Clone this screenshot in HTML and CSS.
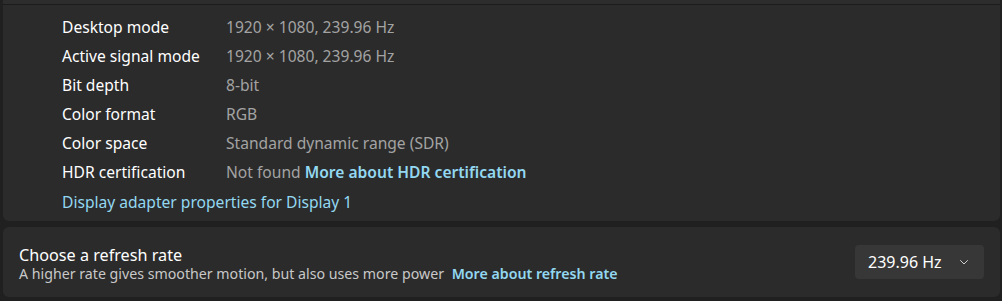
FILE: index.html
```html
<!DOCTYPE html>
<html lang="en">
<head>
    <meta charset="UTF-8">
    <title>Advanced display</title>
    <link rel="stylesheet" href="styles.css">
</head>
<body>
    <div class="expander">
        <div class="expander-head"></div>
        <div class="expander-body">
            <div class="info-row">
                <span class="label">Desktop mode</span>
                <span class="value">1920 × 1080, 239.96 Hz</span>
            </div>
            <div class="info-row">
                <span class="label">Active signal mode</span>
                <span class="value">1920 × 1080, 239.96 Hz</span>
            </div>
            <div class="info-row">
                <span class="label">Bit depth</span>
                <span class="value">8-bit</span>
            </div>
            <div class="info-row">
                <span class="label">Color format</span>
                <span class="value">RGB</span>
            </div>
            <div class="info-row">
                <span class="label">Color space</span>
                <span class="value">Standard dynamic range (SDR)</span>
            </div>
            <div class="info-row">
                <span class="label">HDR certification</span>
                <span class="value">Not found <a class="link strong" href="#">More about HDR certification</a></span>
            </div>
            <div class="info-row last">
                <a class="link" href="#">Display adapter properties for Display 1</a>
            </div>
        </div>
    </div>
    <div class="setting-card">
        <div class="setting-text">
            <div class="setting-title">Choose a refresh rate</div>
            <div class="setting-desc">A higher rate gives smoother motion, but also uses more power <a class="link strong" href="#">More about refresh rate</a></div>
        </div>
        <div class="combo">
            <span>239.96 Hz</span>
            <svg class="chevron" viewBox="0 0 12 12" width="12" height="12">
                <path d="M2.5 4.5 L6 8 L9.5 4.5" fill="none" stroke="#cfcfcf" stroke-width="1" stroke-linecap="round" stroke-linejoin="round"/>
            </svg>
        </div>
    </div>
</html>
```
FILE: styles.css
```css
body {
    margin: 0;
    background: #202020;
    font-family: 'Noto Sans', 'Open Sans', sans-serif;
    color: #ffffff;
}
a {
    text-decoration: none;
}
.expander {
    margin: 0 2px 0 3px;
}
.expander-head {
    height: 4px;
    background: #2d2d2d;
    border-bottom: 1px solid #1c1c1c;
}
.expander-body {
    background: #2b2b2b;
    padding: 7px 0 5px 59px;
    border-radius: 0 0 6px 6px;
}
.info-row {
    display: flex;
    height: 29px;
    align-items: center;
    font-size: 15.6px;
}
.info-row.last {
    height: 30px;
    padding-top: 1px;
    box-sizing: border-box;
}
.label {
    width: 164px;
    color: #ffffff;
}
.value {
    color: #a3a3a3;
}
.link {
    color: #93d8f1;
}
.strong {
    font-weight: 600;
}
.setting-card {
    margin: 6px 2px 0 3px;
    background: #2b2b2b;
    border-radius: 6px;
    height: 70px;
    display: flex;
    align-items: center;
    justify-content: space-between;
    padding: 0 16px;
}
.setting-text {
    margin-top: 4px;
}
.setting-title {
    font-size: 16.2px;
    line-height: 20px;
    color: #ffffff;
}
.setting-desc {
    font-size: 14.2px;
    line-height: 18px;
    color: #c8c8c8;
}
.setting-desc .link {
    margin-left: 4px;
}
.combo {
    width: 129px;
    height: 34px;
    box-sizing: border-box;
    background: #373737;
    border-radius: 4px;
    display: flex;
    align-items: center;
    justify-content: space-between;
    padding: 0 14px 0 13px;
    font-size: 16px;
}
.chevron {
    display: block;
}
```
